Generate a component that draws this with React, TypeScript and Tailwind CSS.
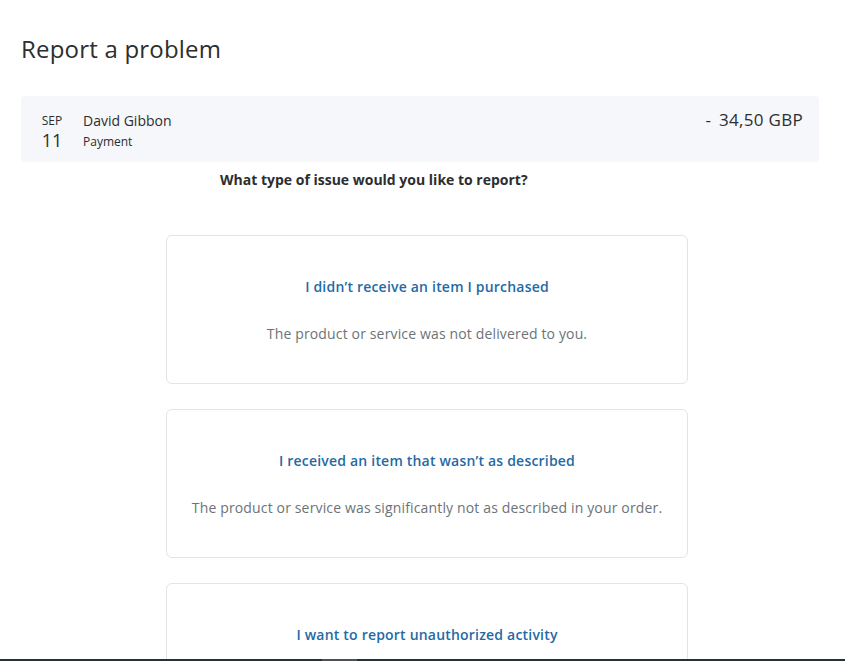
import React from "react";

const options: { title: string; desc?: string }[] = [
  { title: "I didn’t receive an item I purchased", desc: "The product or service was not delivered to you." },
  { title: "I received an item that wasn’t as described", desc: "The product or service was significantly not as described in your order." },
  { title: "I want to report unauthorized activity" },
];

export default function App() {
  return (
    <div className="h-[661px] overflow-hidden bg-white text-[#2c2e2f]" style={{ fontFamily: '"Open Sans", "Noto Sans", sans-serif' }}>
      <div className="pl-[21px] pt-[33px]">
        <div className="w-[798px]">
          <h1 className="text-[24px] leading-[32px] font-normal text-[#2c2e2f] tracking-[0.2px]">Report a problem</h1>
          <div className="mt-[31px] h-[66px] rounded-[4px] bg-[#f5f7fa] flex justify-between pl-[19px] pr-[16px] pt-[15px]">
            <div className="flex">
              <div className="flex flex-col items-center w-[24px] pt-[2px]">
                <span className="text-[12px] leading-[16px] text-[#2c2e2f]">SEP</span>
                <span className="text-[18px] leading-[22px] text-[#2c2e2f]">11</span>
              </div>
              <div className="ml-[19px] flex flex-col">
                <span className="text-[14px] leading-[20px]">David Gibbon</span>
                <span className="text-[12px] leading-[18px] mt-[2px]">Payment</span>
              </div>
            </div>
            <div className="text-[17px] leading-[20px] -mt-[1px] flex">
              <span className="mr-[8px]">-</span>
              <span className="tracking-[0.3px]">34,50 GBP</span>
            </div>
          </div>
          <p className="mt-[8px] ml-[199px] text-[14px] leading-[20px] font-bold">What type of issue would you like to report?</p>
          <div className="ml-[145px] w-[522px] mt-[45px] flex flex-col gap-[25px]">
            {options.map((o) => (
              <div key={o.title} className="h-[149px] shrink-0 rounded-[6px] border border-[#e2e4e6] flex flex-col items-center pt-[41px]">
                <span className="text-[14px] leading-[20px] font-semibold tracking-[0.2px] text-[#1f6aa6]">{o.title}</span>
                {o.desc && (
                  <span className="mt-[27px] text-[14px] leading-[20px] tracking-[0.15px] text-[#6c7378]">{o.desc}</span>
                )}
              </div>
            ))}
          </div>
        </div>
      </div>
      <div className="fixed bottom-0 left-0 right-0 h-[2px] bg-[#263238]">
        <div className="ml-[322px] w-[35px] h-full bg-[#4b5257]" />
      </div>
    </div>
  );
}
